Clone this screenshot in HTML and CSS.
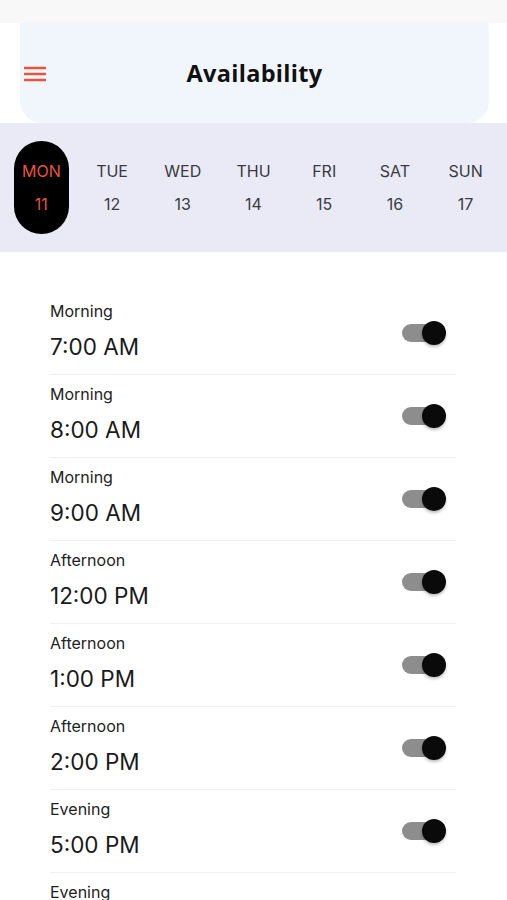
FILE: index.html
```html
<html lang="en">

<head>
    <meta charset="UTF-8">
    <meta name="viewport" content="width=device-width, initial-scale=1.0">
    <title>Availability</title>
    <link rel="stylesheet" href="styles.css">
</head>

<body>
    <div class="status-bar"></div>

    <!-- Header -->
    <div class="header">
        <button class="menu-btn" title="Menu">
            <svg width="22" height="16" viewBox="0 0 22 16">
                <path d="M0 2h22M0 8h22M0 14h22" stroke="#e8553a" stroke-width="2.4" />
            </svg>
        </button>
        <h1>Availability</h1>
    </div>

    <!-- Week strip -->
    <div class="week">
        <div class="day selected"><span>MON</span><span>11</span></div>
        <div class="day"><span>TUE</span><span>12</span></div>
        <div class="day"><span>WED</span><span>13</span></div>
        <div class="day"><span>THU</span><span>14</span></div>
        <div class="day"><span>FRI</span><span>15</span></div>
        <div class="day"><span>SAT</span><span>16</span></div>
        <div class="day"><span>SUN</span><span>17</span></div>
    </div>

    <!-- Slots -->
    <div class="slots">
        <div class="slot">
            <div class="slot-text"><div class="period">Morning</div><div class="time">7:00 AM</div></div>
            <div class="toggle on"></div>
        </div>
        <div class="slot">
            <div class="slot-text"><div class="period">Morning</div><div class="time">8:00 AM</div></div>
            <div class="toggle on"></div>
        </div>
        <div class="slot">
            <div class="slot-text"><div class="period">Morning</div><div class="time">9:00 AM</div></div>
            <div class="toggle on"></div>
        </div>
        <div class="slot">
            <div class="slot-text"><div class="period">Afternoon</div><div class="time">12:00 PM</div></div>
            <div class="toggle on"></div>
        </div>
        <div class="slot">
            <div class="slot-text"><div class="period">Afternoon</div><div class="time">1:00 PM</div></div>
            <div class="toggle on"></div>
        </div>
        <div class="slot">
            <div class="slot-text"><div class="period">Afternoon</div><div class="time">2:00 PM</div></div>
            <div class="toggle on"></div>
        </div>
        <div class="slot">
            <div class="slot-text"><div class="period">Evening</div><div class="time">5:00 PM</div></div>
            <div class="toggle on"></div>
        </div>
        <div class="slot">
            <div class="slot-text"><div class="period">Evening</div><div class="time">6:00 PM</div></div>
            <div class="toggle on"></div>
        </div>
    </div>
</body>

</html>
```

FILE: styles.css
```css
body {
    margin: 0;
    background: #ffffff;
    font-family: Inter, "Open Sans", sans-serif;
    color: #1c1c1e;
    overflow: hidden;
}

.status-bar {
    height: 23px;
    background: #f8f8f8;
}

.header {
    margin: 0 18px 0 20px;
    height: 100px;
    background: #f1f6fd;
    border-radius: 0 0 22px 22px;
    display: flex;
    align-items: center;
    justify-content: center;
    position: relative;
}

.header h1 {
    margin: 0;
    font-family: "Open Sans", sans-serif;
    font-size: 23.5px;
    font-weight: 700;
    color: #111111;
    letter-spacing: 0.3px;
}

.menu-btn {
    position: absolute;
    left: 4px;
    top: 43px;
    padding: 0;
    border: none;
    background: none;
    line-height: 0;
}

.week {
    height: 129px;
    background: #e9eaf6;
    padding: 0 6px;
    display: grid;
    grid-template-columns: repeat(7, 1fr);
    align-items: center;
}

.day {
    display: flex;
    flex-direction: column;
    align-items: center;
    gap: 10px;
    font-size: 16px;
    color: #3a3a3f;
    height: 93px;
    justify-content: center;
}

.day.selected {
    background: #000000;
    color: #e8553a;
    width: 55px;
    border-radius: 28px;
    justify-self: center;
}

.day span {
    line-height: 23px;
}

.slots {
    padding: 40px 51px 0 50px;
}

.slot {
    display: flex;
    align-items: center;
    justify-content: space-between;
    padding: 8px 10px 12px 0;
    border-bottom: 1px solid #f0f0f0;
}

.period {
    font-size: 16px;
    line-height: 22px;
    color: #222222;
}

.time {
    margin-top: 10px;
    font-size: 22.5px;
    line-height: 30px;
    color: #1a1a1a;
}

.toggle {
    position: relative;
    width: 38px;
    height: 18px;
    margin: 3px 6px 0 0;
    border-radius: 9px;
    background: #8d8d8d;
}

.toggle.on::after {
    content: "";
    position: absolute;
    left: 20px;
    top: -3px;
    width: 24px;
    height: 24px;
    border-radius: 50%;
    background: #0a0a0a;
    box-shadow: 0 2px 3px rgba(0, 0, 0, 0.25);
}
```
